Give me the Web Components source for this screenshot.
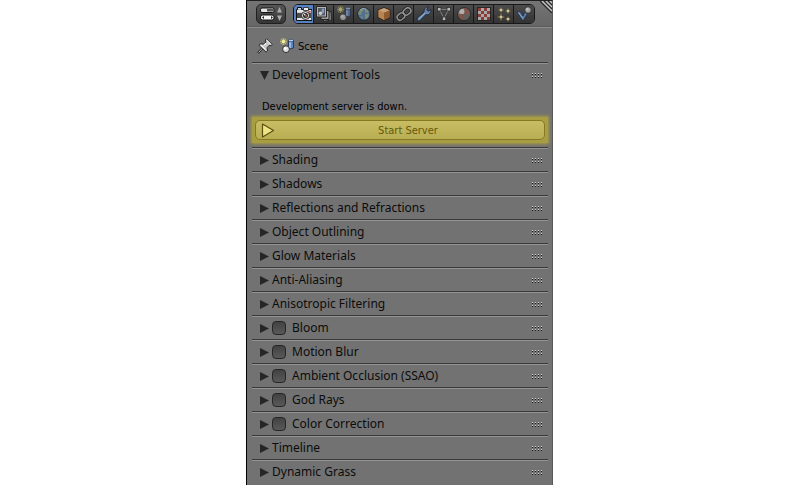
<!DOCTYPE html>
<html lang="en">
<head>
<meta charset="utf-8">
<title>Scene Properties</title>
<style>
  body { margin: 0; min-height: 100vh; display: grid; grid-template-columns: 246fr 307fr 247fr; background: #fff; font: 12px/16px "Noto Sans", sans-serif; color: #0c0c0c; }
  properties-editor { grid-column: 2; }
</style>
</head>
<body>
<properties-editor>
  <editor-header slot="header">
    <context-tab label="Render" icon="render" active></context-tab>
    <context-tab label="Render Layers" icon="layers"></context-tab>
    <context-tab label="Scene" icon="scene"></context-tab>
    <context-tab label="World" icon="world"></context-tab>
    <context-tab label="Object" icon="object"></context-tab>
    <context-tab label="Constraints" icon="link"></context-tab>
    <context-tab label="Modifiers" icon="wrench"></context-tab>
    <context-tab label="Data" icon="mesh"></context-tab>
    <context-tab label="Material" icon="material"></context-tab>
    <context-tab label="Texture" icon="texture"></context-tab>
    <context-tab label="Particles" icon="particles"></context-tab>
    <context-tab label="Physics" icon="physics"></context-tab>
  </editor-header>
  <context-path>Scene</context-path>
  <panel-section open><span slot="title">Development Tools</span>
    <server-status>Development server is down.<span slot="action">Start Server</span></server-status>
  </panel-section>
  <panel-section><span slot="title">Shading</span></panel-section>
  <panel-section><span slot="title">Shadows</span></panel-section>
  <panel-section><span slot="title">Reflections and Refractions</span></panel-section>
  <panel-section><span slot="title">Object Outlining</span></panel-section>
  <panel-section><span slot="title">Glow Materials</span></panel-section>
  <panel-section><span slot="title">Anti-Aliasing</span></panel-section>
  <panel-section><span slot="title">Anisotropic Filtering</span></panel-section>
  <panel-section toggle><span slot="title">Bloom</span></panel-section>
  <panel-section toggle><span slot="title">Motion Blur</span></panel-section>
  <panel-section toggle><span slot="title">Ambient Occlusion (SSAO)</span></panel-section>
  <panel-section toggle><span slot="title">God Rays</span></panel-section>
  <panel-section toggle><span slot="title">Color Correction</span></panel-section>
  <panel-section><span slot="title">Timeline</span></panel-section>
  <panel-section><span slot="title">Dynamic Grass</span></panel-section>
</properties-editor>
<script>
const SCENE = `<circle cx="3.500" cy="3.500" r="3.500" fill="#d8d070" opacity=".35"/><path d="M3.500 0v7M0 3.500h7M1 1l5 5M6 1l-5 5" stroke="#d8d070" stroke-width="1" opacity=".5"/><circle cx="3.500" cy="3.500" r="1.700" fill="#f4eca0"/>
  <path d="M8.500 2.500v7.500q2.500 1.800 5 0v-7.500z" fill="#5c86c8" stroke="#1c2c48" stroke-width=".8"/><path d="M10 4v6" stroke="#a4c8f4" stroke-width="1.600"/><ellipse cx="11" cy="2.500" rx="2.500" ry="1.300" fill="#b4d0f4" stroke="#1c2c48" stroke-width=".6"/>
  <circle cx="6" cy="11.200" r="3.400" fill="#dcdcdc" stroke="#222" stroke-width=".9"/><circle cx="5.300" cy="10.300" r="1.400" fill="#fff"/>`;
const star = (x, y, r) => `<path d="M${x} ${y - r}V${y + r}M${x - r} ${y}H${x + r}" stroke="#2c2818" stroke-width="2" opacity=".5"/><path d="M${x} ${y - r}l.8 ${r - .8}l${r - .8} .8l-${r - .8} .8l-.8 ${r - .8}l-.8 -${r - .8}l-${r - .8} -.8l${r - .8} -.8z" fill="#c4b078"/><circle cx="${x}" cy="${y}" r=".9" fill="#f4ecd0"/>`;
const checks = () => { let s = ''; for (let y = 0; y < 4; y++) for (let x = 0; x < 4; x++) if ((x + y) % 2 === 0) s += `<rect x="${2 + x * 3}" y="${2 + y * 3}" width="3" height="3" fill="#943c34"/>`; return s; };
const ICONS = {
  render: `<path d="M.5 3.500h1v-2h4v2H16v11H.5z" fill="#b8b8b8" stroke="#111"/><path d="M1 4h14v2.500H1z" fill="#e8e8e8"/><path d="M2 2.500h3" stroke="#ddd"/><path d="M7.500 1.500h5v3h-5z" fill="#eee" stroke="#222" stroke-width=".8"/><path d="M1 7h14v5H1z" fill="#4c4c4c"/><path d="M1 13h14" stroke="#f4f4f4" stroke-width="1.600"/><circle cx="9.500" cy="9.500" r="4" fill="#d8d8d8" stroke="#181818" stroke-width=".8"/><circle cx="9.500" cy="9.500" r="2.500" fill="#282828"/><circle cx="10.200" cy="10" r="1.200" fill="#8a5a50"/><circle cx="8.700" cy="8.700" r=".8" fill="#fff"/><rect x="12.500" y="5" width="2" height="1.500" fill="#b43a2c"/>`,
  layers: `<path d="M7 7l8-1.500 .5 8.500-8 1.500z" fill="#999" stroke="#222"/><path d="M5 4.500h8v9H5z" fill="#b0b0b0" stroke="#222"/><path d="M.5.5h10v10.500H.5z" fill="#c4c4c4" stroke="#222"/><path d="M2 2h7v7.500H2z" fill="#5a6270"/><circle cx="4.500" cy="7.300" r="1.800" fill="#e0e0e0"/><path d="M5.800 2.800h2.200v4H6z" fill="#8fb2e0"/>`,
  scene: `<g opacity=".65" transform="translate(1 0)">${SCENE}</g>`,
  world: `<circle cx="8" cy="8" r="6.300" fill="#52789e" stroke="#1b2430"/><path d="M3 5q2-3 5-2l-1 2-2 1 1 2-2 1-2-1zM9 3q3 0 4 3l-2 1-2-1zM9 8l4 0-1 4-3 1zM4 10l3 1-1 2z" fill="#8a947c"/><path d="M4 4q3-3 6-1" fill="none" stroke="#a0b4c4"/>`,
  object: `<path d="M2 4l6-2.500L14 4v7.500L8 14.500 2 11.500z" fill="#b97b42" stroke="#2a1b0e"/><path d="M2.500 4.200L8 6.500v7.400l-5.500-2.800z" fill="#c98f58"/><path d="M8 6.500l5.500-2.300v7L8 13.900z" fill="#99602c"/><path d="M2.500 4.200L8 2l5.500 2.200L8 6.500z" fill="#d8ae80"/>`,
  link: `<g fill="none" transform="rotate(-40 8 8)"><rect x="0" y="5" width="8" height="6" rx="3" stroke="#181818" stroke-width="3"/><rect x="8" y="5" width="8" height="6" rx="3" stroke="#181818" stroke-width="3"/><rect x="0" y="5" width="8" height="6" rx="3" stroke="#9a9a9a" stroke-width="1.600"/><rect x="8" y="5" width="8" height="6" rx="3" stroke="#9a9a9a" stroke-width="1.600"/></g>`,
  wrench: `<path d="M1.500 14.500q-1-1.200 0-2.700L8 6.200q-.5-3.700 2.500-5l2-.2-1.800 2.700 1.400 1.600L15 3.500q.3 3.800-2.500 5-1.400.6-2.800.2L4.200 14.500q-1.400 1-2.700 0z" fill="#6c8ebc" stroke="#182334" stroke-width=".9"/><path d="M2.700 13L9 7.300" stroke="#a9c4e6"/>`,
  mesh: `<path d="M3.500 3.500h9L8 12.500z" fill="none" stroke="#888"/><g fill="#c8c8c8" stroke="#222" stroke-width=".7"><rect x="1.500" y="1.500" width="3.500" height="3.500"/><rect x="11" y="1.500" width="3.500" height="3.500"/><rect x="6.300" y="11" width="3.500" height="3.500"/></g>`,
  material: `<circle cx="8" cy="8" r="6.300" fill="#9a9090" stroke="#1e1a1a"/><path d="M8 8V2a6 6 0 0 1 6 6zM8 8v6a6 6 0 0 1-6-6z" fill="#84584e"/><path d="M8 8h6a6 6 0 0 1-6 6z" fill="#686464"/><circle cx="6" cy="5.500" r="2.500" fill="#ddd" opacity=".6"/>`,
  texture: `<rect x="1.500" y="1.500" width="13" height="13" fill="#b8b8b8" stroke="#252525"/>${checks()}`,
  particles: star(5, 4, 3.5) + star(12, 5, 3.5) + star(5, 11, 4.5) + star(12, 13, 3),
  physics: `<path d="M1 6l3-.5L7 10l2-4 2.500 2L7 15z" fill="#5c80b4" stroke="#1c2838" stroke-width=".7"/><path d="M2.500 6.500L7 13" stroke="#94b4dc"/><circle cx="12" cy="4" r="3.300" fill="#b0b0b0" stroke="#222" stroke-width=".8"/><circle cx="11.300" cy="3.200" r="1.200" fill="#d8d8d8"/>`
};
const define = (name, markup, setup) => {
  const t = document.createElement('template');
  t.innerHTML = markup;
  customElements.define(name, class extends HTMLElement {
    constructor() { super(); this.attachShadow({ mode: 'open' }); }
    connectedCallback() {
      if (this.shadowRoot.childNodes.length) return;
      this.shadowRoot.append(t.content.cloneNode(true));
      if (setup) setup(this, this.shadowRoot);
    }
  });
};

define('context-tab', `<style>
  :host { display: block; }
  button { display: grid; place-items: center; box-sizing: border-box; width: 20px; height: 18px; margin: 0; padding: 0; border: 0; border-right: 1px solid #181818; background: linear-gradient(#4c4c4c, #343434); }
  :host([active]) button { background: #5680c2; }
  :host(:last-child) button { border-right: 0; }
  svg { width: 16px; height: 16px; opacity: .88; }
  :host([active]) svg { opacity: 1; }
</style><button type="button"><svg viewBox="0 0 16 16" aria-hidden="true"></svg></button>`, (el, root) => {
  root.querySelector('button').setAttribute('aria-label', el.getAttribute('label'));
  root.querySelector('button').setAttribute('aria-pressed', el.hasAttribute('active'));
  root.querySelector('svg').innerHTML = ICONS[el.getAttribute('icon')];
});

define('editor-header', `<style>
  :host { display: flex; align-items: flex-start; box-sizing: border-box; height: 27px; padding: 3px 0 0 9px; gap: 7px; background: linear-gradient(#747474, #666); border-bottom: 1px solid #8c8c8c; box-shadow: inset 0 -1px #5c5c5c; position: relative; }
  .type { width: 30px; height: 20px; padding: 0; border: 1px solid #202020; border-radius: 5px; background: linear-gradient(#565656, #363636); display: grid; place-items: center; }
  .type svg { width: 28px; height: 18px; }
  nav { display: flex; overflow: hidden; border: 1px solid #181818; border-radius: 5px; }
  .grip { position: absolute; right: 0; top: 0; width: 12px; height: 12px; }
</style>
<button class="type" type="button" aria-label="Editor type" aria-haspopup="menu"><svg viewBox="0 0 28 18" aria-hidden="true">
  <rect x="3.500" y="3" width="13.500" height="4.500" rx="1.500" fill="#e4e4e4" stroke="#151515"/><path d="M10 4h6.500v2.500H10z" fill="#555"/>
  <rect x="3.500" y="10" width="13.500" height="5" rx="2" fill="#f4f4f4" stroke="#151515"/><path d="M7 11L5 12.500l2 1.500zM14 11l2 1.500-2 1.500z" fill="#222"/>
  <path d="M20 7.500l2.500-5.500L25 7.500zM20 10.500l2.500 5.500 2.500-5.500z" fill="#aaa"/></svg></button>
<nav aria-label="Context"><slot></slot></nav>
<svg class="grip" viewBox="0 0 12 12" aria-hidden="true"><path d="M0 0l12 12M4 0l8 8M8 0l4 4" stroke="#262626" stroke-width="1.300"/><path d="M2 0l10 10M6 0l6 6M10 0l2 2" stroke="#c4c4c4" stroke-width="1.300"/></svg>`);

define('context-path', `<style>
  :host { display: flex; align-items: center; box-sizing: border-box; height: 34px; padding: 2px 0 0 5px; gap: 6px; font: 11px/16px "DejaVu Sans Condensed", "DejaVu Sans", sans-serif; color: #000; }
  button { width: 17px; height: 16px; padding: 0; border: 0; background: none; }
  svg { display: block; width: 16px; height: 16px; }
  span { margin-left: -4px; padding-top: 2px; }
</style>
<button type="button" aria-label="Pin context"><svg viewBox="0 0 16 16" aria-hidden="true"><path d="M1 15l5.500-6" stroke="#222" stroke-width="2"/><path d="M1.500 14.500L6 9.500" stroke="#ddd" stroke-width=".8"/><path d="M9.500.8L15.300 6.500 14 7.700l-2-.3-2 2.500.6 3-1.600 1.200L2 7.400l1.200-1.600 3 .4L9 4 8.300 2z" fill="#c8c8c8" stroke="#202020" stroke-width=".9"/><path d="M4 7l4.500 4.500M10 2.300l3.700 3.800M9 5L7 7.500" stroke="#fff"/></svg></button>
<svg viewBox="0 0 16 16" aria-hidden="true">${SCENE}</svg>
<span><slot></slot></span>`);

define('panel-section', `<style>
  :host { display: block; border-top: 1px solid #3a3a3a; box-shadow: inset 0 1px #929292; }
  header { display: flex; align-items: center; height: 23px; padding: 1px 5px 0 8px; box-sizing: border-box; }
  h2 { display: flex; flex: 1; align-items: center; margin: 0; font: inherit; }
  button { display: flex; align-items: center; padding: 0; border: 0; background: none; color: inherit; font: inherit; text-align: left; white-space: nowrap; }
  .tri { width: 9px; height: 9px; margin-right: 3px; fill: #262626; }
  :host([open]) .tri { transform: rotate(90deg); }
  input { appearance: none; width: 14px; height: 14px; margin: 0 6px 0 0; border: 1px solid #262626; border-radius: 4px; background: linear-gradient(#424242, #595959); }
  input:checked { background: #5680c2; }
  .dots { width: 11px; height: 5px; }
  .body { padding: 0 3px 7px; }
  :host(:not([open])) .body { display: none; }
</style>
<header><h2></h2><svg class="dots" viewBox="0 0 11 5" shape-rendering="crispEdges" aria-hidden="true"><path d="M0 1.500h11M0 4.500h11" stroke="#1c1c1c" stroke-dasharray="1 2"/><path d="M0 .500h11M0 3.500h11" stroke="#d0d0d0" stroke-dasharray="1 2"/></svg></header>
<div class="body"><slot></slot></div>`, (el, root) => {
  const tri = '<svg class="tri" viewBox="0 0 8 8" aria-hidden="true"><path d="M0 0l8 4-8 4z"/></svg>';
  root.querySelector('h2').innerHTML = el.hasAttribute('toggle')
    ? `<button type="button" aria-label="Expand">${tri}</button><input type="checkbox" id="enabled"><label for="enabled"><slot name="title"></slot></label>`
    : `<button type="button">${tri}<slot name="title"></slot></button>`;
  const b = root.querySelector('button');
  b.setAttribute('aria-expanded', el.hasAttribute('open'));
  b.addEventListener('click', () => b.setAttribute('aria-expanded', el.toggleAttribute('open')));
});

define('server-status', `<style>
  :host { display: block; padding-top: 13px; font: 11px/16px "DejaVu Sans Condensed", "DejaVu Sans", sans-serif; color: #000; }
  p { margin: 0 0 2px; padding-left: 7px; }
  .highlight { margin: 0 -3px -3px; padding: 3px; background: #a99d42; box-shadow: 0 0 3px 1px #a99d42; }
  button { display: grid; grid-template-columns: 14px 1fr; align-items: center; box-sizing: border-box; width: 100%; height: 20px; padding: 2px 3px 0 5px; border: 1px solid #857a24; border-radius: 5px; background: linear-gradient(#c8bd62, #b9ae53); color: #62590c; font: inherit; }
  svg { width: 14px; height: 16px; }
</style>
<p><slot></slot></p>
<div class="highlight"><button type="button"><svg viewBox="0 0 14 16" aria-hidden="true"><path d="M1.500 1L12.500 7.500l-11 6.500z" fill="#eee486" stroke="#5a5010" stroke-width="1.200" stroke-linejoin="round"/></svg><slot name="action"></slot></button></div>`);

define('properties-editor', `<style>
  :host { display: block; box-sizing: border-box; min-height: 100vh; background: #727272; border-left: 1px solid #000; border-right: 1px solid #585858; border-top: 1px solid #202020; }
  main { padding: 0 4px 0 5px; }
</style>
<slot name="header"></slot><main><slot></slot></main>`);
</script>
</body>
</html>
